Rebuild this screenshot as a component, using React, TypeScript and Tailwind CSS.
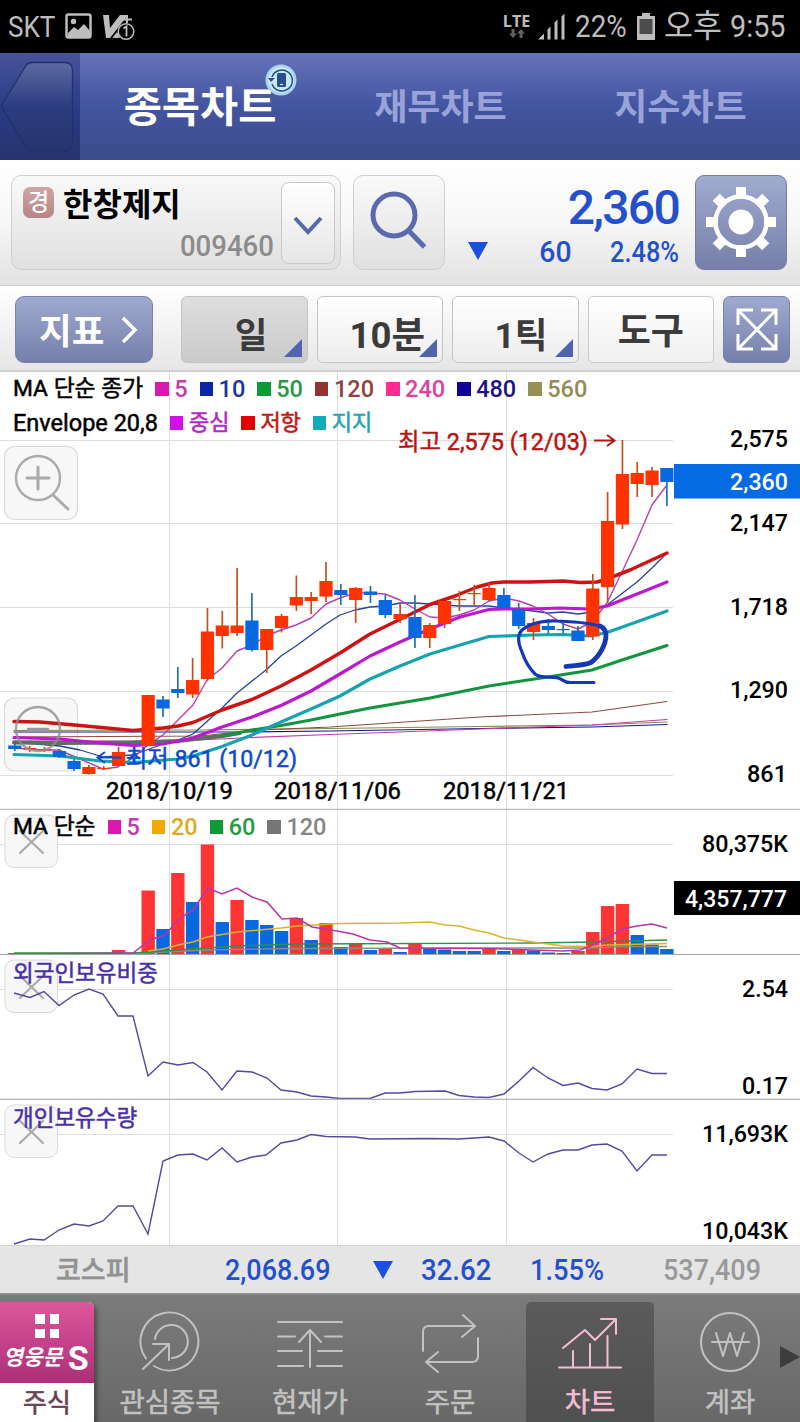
import type { ReactNode } from "react";

const RED = "#ff3300";
const BLUE = "#0768df";
const STEP = 14.82;

const xAt = (i: number) => 14.8 + i * STEP;

// [up, wick top, body top, body bottom, wick bottom]
const candles: [number, number, number, number, number][] = [
  [0, 743, 745.5, 749, 751],
  [1, 746, 748, 749.5, 752],
  [1, 747, 749, 750.5, 752],
  [0, 749, 751, 757, 758],
  [0, 759, 761, 769, 771],
  [1, 765, 767, 774, 774.5],
  [1, 766, 768, 769, 770],
  [1, 747, 752, 766, 766],
  [0, 755, 757, 759, 761],
  [1, 695, 695, 746, 746],
  [0, 696, 699.5, 708.5, 717],
  [0, 667, 689, 693, 698],
  [1, 658, 680, 694.5, 698],
  [1, 608, 631.5, 679, 681],
  [1, 611, 625.5, 636, 648.5],
  [1, 568, 625.5, 633, 636],
  [0, 593, 620.5, 650, 651.5],
  [1, 629, 629, 650, 673],
  [1, 614, 616, 628, 632.5],
  [1, 575.5, 597, 605.5, 611],
  [1, 592, 597, 601, 614],
  [1, 562, 581, 596.5, 602],
  [0, 584, 590, 595, 605],
  [1, 587, 588, 600, 623],
  [0, 586, 591.5, 595, 603],
  [0, 595, 600, 615, 618],
  [1, 604, 614, 619, 623],
  [0, 595, 617, 638, 648],
  [1, 623, 625, 638, 648],
  [1, 601, 601, 624, 628],
  [1, 591, 599, 600.2, 611],
  [1, 585, 593, 594.2, 606],
  [1, 583, 588, 600, 602],
  [0, 588, 595, 608, 609],
  [0, 603, 609, 626, 629],
  [1, 618, 623, 632, 640],
  [0, 619, 626, 630, 634],
  [0, 623, 629, 630.2, 633],
  [0, 626, 630.5, 641, 641],
  [1, 574, 588.5, 636.5, 640],
  [1, 492, 521, 587, 603],
  [1, 440, 474, 524.5, 529],
  [1, 462, 473, 484, 497],
  [1, 467, 470.5, 485, 497],
  [0, 468, 468, 482, 506],
];

// [up, bar top]
const volumes: [number, number][] = [
  [1, 953], [0, 953.5], [1, 953.5], [0, 953.5], [0, 953.5], [1, 953.5], [1, 953.5], [1, 950],
  [0, 953], [1, 890.5], [0, 929], [1, 873], [0, 902], [1, 844.5], [0, 922], [1, 900],
  [0, 920], [0, 925], [0, 931], [1, 918], [0, 940], [1, 923], [0, 947], [1, 943.5],
  [0, 950], [1, 949], [0, 952], [1, 944], [0, 948.5], [0, 949.5], [0, 951], [0, 951],
  [1, 949], [0, 951], [1, 950], [0, 950.5], [0, 952.5], [0, 953], [1, 951], [1, 932],
  [1, 906], [1, 904], [0, 935], [0, 944.5], [0, 949],
];

const priceLines = [
  { color: "#8a8a4a", w: 1.2, pts: "14,730.5 200,730 330,728.5 480,726.5 592,725 667,722" },
  { color: "#1d1488", w: 1.2, pts: "14,732 240,732 330,731 480,728.5 592,727 667,724.5" },
  { color: "#c63aa8", w: 1.2, pts: "14,741 178,741 240,738 330,734.5 480,729 592,725 667,719.5" },
  { color: "#8d4a3e", w: 1.2, pts: "14,737 200,736 260,730 330,727 375,724 480,717 592,712 667,701.5" },
  { color: "#23439c", w: 1.3, pts: "14,742 60,746 80,750 103,757 133,755 163,744 178,740 193,734 222,708 237,693 266,670 281,656 296,646 311,635 326,624 340,615 355,610 370,607 385,606 400,603 415,603 459,606 489,606 504,608 533,611 548,613 563,612 578,614 592,612 607,605 637,582 652,568 667,553" },
  { color: "#b93fae", w: 1.4, pts: "14,748 44,750 59,750 80,759 103,769 118,767 133,758 148,745 163,735 193,705 207,680 222,668 237,651 252,645 266,636 281,630 296,625 311,618 326,604 340,598 355,593 370,593 385,594 400,600 415,609 430,617 445,618 459,615 474,610 489,601 504,598 519,601 533,606 548,614 563,624 578,629 592,622 607,603 622,572 637,540 652,505 667,485" },
  { color: "#5a7060", w: 4, pts: "14,742.5 60,743 133,742.5 178,741 222,736 240,733" },
  { color: "#12953f", w: 3, pts: "222,736 252,730 281,725.5 311,720 340,714 370,708 430,698 489,686 548,677 592,670 622,660 667,645.5" },
  { color: "#bb18cf", w: 3.2, pts: "14,737.5 60,739 100,743 133,745.5 163,744 193,738 222,727 252,717 281,705.5 311,691 340,674 370,656 400,642 430,629 460,617 489,609.5 504,609 530,609 560,608 590,609 607,606 667,582" },
  { color: "#16a3b0", w: 3.2, pts: "14,754.5 60,756 80,758.5 100,761 133,762.5 178,759 193,756 222,746.5 252,735 281,722 311,709 340,696 370,679 400,666 430,654 460,645 489,636.5 504,636 533,635 563,634.5 590,636 607,632.5 667,611" },
  { color: "#cf1212", w: 3.5, pts: "14,721.5 40,722 80,725.5 133,730.5 163,728 178,726 193,722.5 222,710 252,699.5 281,686 311,670 340,653 370,634 413,613 430,604.5 455,596 477,587 492,583 503,582 530,582 563,581 580,582.5 597,582 607,579 630,570 667,553" },
];

const volumeLines = [
  { color: "#8a8a8a", w: 1.3, pts: "14,954 133,953.5 207,950 297,948.5 500,948 592,948 622,946.5 667,946.5" },
  { color: "#2e9148", w: 1.3, pts: "14,953 133,953 207,948 237,946 297,944 533,943 592,942 667,940" },
  { color: "#dcb32c", w: 1.4, pts: "148,951 163,949 178,945 193,942 207,937 237,932 281,928 297,926 340,923.5 400,923 430,922 445,925 459,926 474,930 489,933 504,938 519,940 533,942 563,946 592,946.5 607,945 667,943.5" },
  { color: "#b835a8", w: 1.5, pts: "14,954 133,953 150,940 165,935 180,918 193,910 208,888 222,894 237,888 252,897 267,902 282,919 297,918 312,927 337,931 353,934 370,940 387,942 400,948 489,948.5 563,951 580,950 593,945 607,938 622,929 637,926 652,924 667,928" },
];

const foreignPts =
  "14,993 30,997.5 44,991.5 59,1005.5 74,995 89,989 103,994 118,1016 133,1016 148,1076 163,1062 178,1065 193,1062.5 207,1072 222,1090 237,1071 252,1072 267,1078 281,1090 297,1092 311,1096 326,1097 340,1098.5 370,1098.5 385,1093 400,1093 415,1091.5 445,1091 459,1095.5 474,1097 489,1097.5 504,1094 519,1081 533,1067.5 548,1078 563,1085.5 578,1083 592,1088.5 607,1090 622,1084 637,1069 652,1073.5 667,1073.5";
const personalPts =
  "14,1244 30,1239 44,1240 59,1230 74,1224 89,1226 103,1221 118,1206 133,1206 148,1234 163,1161 178,1155 193,1154 207,1160 222,1148 237,1162 252,1157 266,1155 281,1143 297,1140 311,1134.5 326,1136.5 355,1137 370,1139 430,1138.5 459,1139 489,1137 504,1141 519,1153 533,1162 548,1154 563,1150 578,1150 592,1145 607,1144 622,1151 637,1171 652,1155 667,1155";

type LegendItem = { label: string; square: string; text: string };

const priceLegend: LegendItem[] = [
  { label: "5", square: "bg-[#dc18b2]", text: "text-[#c23caa]" },
  { label: "10", square: "bg-[#0a26aa]", text: "text-[#1c35a0]" },
  { label: "50", square: "bg-[#0f9a38]", text: "text-[#279947]" },
  { label: "120", square: "bg-[#963232]", text: "text-[#8c4440]" },
  { label: "240", square: "bg-[#ff2d92]", text: "text-[#dc419c]" },
  { label: "480", square: "bg-[#10009a]", text: "text-[#1d1285]" },
  { label: "560", square: "bg-[#969152]", text: "text-[#928c55]" },
];
const envelopeLegend: LegendItem[] = [
  { label: "중심", square: "bg-[#d010e6]", text: "text-[#b42ac6]" },
  { label: "저항", square: "bg-[#e60000]", text: "text-[#c01818]" },
  { label: "지지", square: "bg-[#10aabb]", text: "text-[#28a3ad]" },
];
const volumeLegend: LegendItem[] = [
  { label: "5", square: "bg-[#dc18b2]", text: "text-[#c23caa]" },
  { label: "20", square: "bg-[#f0aa00]", text: "text-[#dfaa22]" },
  { label: "60", square: "bg-[#0f9a38]", text: "text-[#279947]" },
  { label: "120", square: "bg-[#777777]", text: "text-[#858585]" },
];

function Legend({ title, items, korean }: { title: string; items: LegendItem[]; korean?: boolean }) {
  return (
    <div className="flex h-[34px] items-center gap-[12px] leading-[34px] whitespace-nowrap">
      <span className={`text-black [-webkit-text-stroke:0.5px_currentColor] ${korean ? "text-[23.5px]" : "text-[22.8px]"}`}>{title}</span>
      {items.map((it) => (
        <span key={it.label} className={`flex items-center gap-[5.5px] ${it.text}`}>
          <i className={`block h-[13.5px] w-[13.5px] ${it.square}`} />
          <span className={korean ? "text-[22px] [-webkit-text-stroke:0.6px_currentColor]" : "text-[23.5px] font-medium"}>{it.label}</span>
        </span>
      ))}
    </div>
  );
}

function Panel({ top, height, grid, children, legend }: {
  top: number;
  height: number;
  grid: number[];
  children: ReactNode;
  legend: ReactNode;
}) {
  const bottom = top + height;
  return (
    <section className="relative">
      <svg className="block" width={800} height={height} viewBox={`0 ${top} 800 ${height}`}>
        {[169.5, 337.5, 506.5].map((x) => (
          <line key={x} x1={x} x2={x} y1={top} y2={bottom} stroke="#dedede" />
        ))}
        {grid.map((y) => (
          <line key={y} x1={0} x2={673} y1={y} y2={y} stroke="#dedede" />
        ))}
        {children}
      </svg>
      <div className="absolute top-0 left-[13px]">{legend}</div>
    </section>
  );
}

function AxisLabel({ x, y, w, fill = "#000", children }: {
  x: number;
  y: number;
  w: number;
  fill?: string;
  children: string;
}) {
  return (
    <text x={x - w} y={y + 8.3} textLength={w} lengthAdjust="spacingAndGlyphs" fontSize={23.5} fontWeight={500} fill={fill}>
      {children}
    </text>
  );
}

function CloseBox({ y }: { y: number }) {
  return (
    <g>
      <rect x={5} y={y} width={52.5} height={52.5} rx={9} fill="#f7f7f7" stroke="#d9d9d9" />
      <path d={`M20 ${y + 16}l23 22M43 ${y + 16}l-23 22`} stroke="#aaa" strokeWidth={2.2} strokeLinecap="round" />
    </g>
  );
}

function StatusBar() {
  return (
    <div className="flex h-[53px] items-center bg-black px-2 text-[#bdbdbd]">
      <span className="w-[47px] text-[30px] leading-[53px] whitespace-nowrap">
        <span className="inline-block origin-left scale-x-[0.87]">SKT</span>
      </span>
      <svg className="ml-[10px]" width="27" height="27" viewBox="0 0 27 27">
        <rect x="1.5" y="1.5" width="24" height="23" rx="2" fill="none" stroke="#bdbdbd" strokeWidth="2.5" />
        <circle cx="8.5" cy="8.5" r="2.7" fill="#bdbdbd" />
        <path d="M3 20l6-6 4 3 6-6 6 7v6H3z" fill="#bdbdbd" />
      </svg>
      <svg className="ml-[10px]" width="33" height="28" viewBox="0 0 33 28">
        <path d="M1 2h6l1 13L18 2h8L8 25H4z" fill="#bdbdbd" />
        <path d="M25 2v8M20 6.500h10" stroke="#bdbdbd" strokeWidth="2" />
        <path d="M11 24l4-5 3 6h-7z" fill="#bdbdbd" />
        <circle cx="24" cy="18.500" r="7.800" fill="#000" stroke="#bdbdbd" strokeWidth="1.500" />
        <path d="M21.500 15.500l3-2v10" fill="none" stroke="#bdbdbd" strokeWidth="1.800" />
      </svg>
      <div className="ml-auto flex items-center">
        <div className="flex h-[28px] w-[29px] flex-col items-center">
          <span className="font-['Open_Sans'] text-[16px] leading-[16px] font-bold">LTE</span>
          <svg width="16" height="9" viewBox="0 0 16 9" fill="#606060">
            <path d="M2.500 0h3v4.500h2.500L4 9 0 4.500h2.500zM10.500 9h3V4.500H16L12 0 8 4.500h2.500z" />
          </svg>
        </div>
        <svg className="ml-[7px]" width="28" height="27" viewBox="0 0 28 27" fill="#bdbdbd">
          <path d="M0 26.500l6-6v6zM9.500 16.500l3-3v13h-3zM16.500 9.500l3-3v20h-3zM23.500 3.500l3-3v26h-3z" />
        </svg>
        <span className="ml-[9px] w-[53px] text-[32px] leading-[53px] whitespace-nowrap">
          <span className="inline-block origin-left scale-x-[0.87]">22%</span>
        </span>
        <svg className="ml-[9px]" width="18" height="27" viewBox="0 0 18 27">
          <path d="M5 0h8v3h5v24H0V3h5z" fill="#bdbdbd" />
          <path d="M2.500 6h13v15h-13z" fill="#4c4c4c" />
        </svg>
        <span className="ml-[9px] w-[58px] text-[31.500px] leading-[53px] whitespace-nowrap">오후</span>
        <span className="ml-[8px] w-[62px] text-[32px] leading-[53px] whitespace-nowrap">
          <span className="inline-block origin-left scale-x-[0.9]">9:55</span>
        </span>
      </div>
    </div>
  );
}

function Tabs() {
  return (
    <header className="flex h-[107px] bg-linear-to-b from-[#6673ba] via-[#4354a0] via-50% to-[#3b4c8a] leading-[110px] font-bold">
      <button className="h-full w-[80px] bg-linear-to-b from-[#46549c] via-[#293a82] via-55% to-[#27346f]">
        <svg width="80" height="107" viewBox="0 0 80 107">
          <defs>
            <linearGradient id="back" x1="0" y1="0" x2="0" y2="1">
              <stop offset="0" stopColor="#5d69a4" />
              <stop offset="0.500" stopColor="#2c3c80" />
              <stop offset="1" stopColor="#27356f" />
            </linearGradient>
          </defs>
          <path d="M32 9.500H65q7.500 0 7.500 7.500V90q0 7.500-7.500 7.500H32q-4 0-6-3L3 56q-2-3 0-6L26 12.500q2-3 6-3z" fill="url(#back)" stroke="#22306a" strokeWidth="1.300" />
        </svg>
      </button>
      <div className="relative w-[240px] text-center text-[41.500px] text-white">
        종목차트
        <svg className="absolute top-[11px] left-[185px]" width="32" height="32" viewBox="0 0 32 32">
          <circle cx="16" cy="16" r="15.500" fill="#a9d4ee" />
          <circle cx="16" cy="16" r="13" fill="#c9e7f7" />
          <path d="M7 13a10.500 10.500 0 1 1 0 7" fill="none" stroke="#24508c" strokeWidth="1.500" />
          <path d="M3 14h7l-4 4z" fill="#24508c" />
          <rect x="12" y="9" width="9" height="14" rx="1.500" fill="#24508c" />
          <path d="M15 20.500h3" stroke="#c9e7f7" strokeWidth="1.200" />
        </svg>
      </div>
      <div className="w-[241px] text-center text-[36px] text-[#98a4d9]">재무차트</div>
      <div className="w-[239px] text-center text-[36px] text-[#98a4d9]">지수차트</div>
    </header>
  );
}

function StockBar() {
  return (
    <div className="flex h-[126px] items-start border-b border-[#cfcfcf] bg-linear-to-b from-white via-[#f7f7f7] via-50% to-[#e2e2e2] pt-[15px] pl-[11px]">
      <div className="flex h-[95px] w-[330px] rounded-[10px] border-[1.500px] border-[#cfcfcf] bg-linear-to-b from-[#f9f9f9] to-[#e0e0e0]">
        <div className="flex w-[262px] flex-col">
          <div className="flex items-start pt-[11px] pl-[11px]">
            <span className="h-[31px] w-[31px] rounded-[7px] bg-linear-to-b from-[#cfa5a5] to-[#b78585] text-center text-[23px] leading-[31px] font-medium text-white">경</span>
            <span className="ml-[9px] text-[32px] leading-[36px] font-bold text-black">한창제지</span>
          </div>
          <span className="mt-[6px] text-right text-[29px] leading-[34px] text-[#8c8c8c]">
            <span className="inline-block origin-right scale-x-[0.950] font-medium">009460</span>
          </span>
        </div>
        <button className="mt-[6px] ml-[7px] flex h-[82px] w-[54px] items-center justify-center rounded-[8px] border-[1.500px] border-[#c9c9c9] bg-linear-to-b from-white to-[#e6e6e6]">
          <svg className="mt-[6px]" width="30" height="20" viewBox="0 0 30 20" fill="none" stroke="#5668ae" strokeWidth="4">
            <path d="M2 2l13 14L28 2" />
          </svg>
        </button>
      </div>
      <button className="ml-[12px] flex h-[95px] w-[92px] items-center justify-center rounded-[10px] border-[1.500px] border-[#cfcfcf] bg-linear-to-b from-[#fafafa] to-[#e0e0e0]">
        <svg className="mb-[6px]" width="60" height="62" viewBox="0 0 60 62" fill="none" stroke="#5a6aad" strokeWidth="5">
          <circle cx="25" cy="26" r="21" />
          <path d="M39 41l16.500 17" />
        </svg>
      </button>
      <div className="ml-[23px] flex w-[211px] flex-col font-medium text-[#2450cc]">
        <span className="pt-[7px] text-right text-[48px] leading-[52px] tracking-[-1.700px]">2,360</span>
        <div className="mt-[1px] flex h-[34px] items-center text-[29.500px] leading-[34px]">
          <svg className="mb-[3px]" width="20" height="18" viewBox="0 0 20 18" fill="#1a4fe0">
            <path d="M0 0h20L10 18z" />
          </svg>
          <span className="ml-auto origin-right scale-x-[0.960]">60</span>
          <span className="w-[107px] origin-right scale-x-[0.860] text-right">2.48%</span>
        </div>
      </div>
      <button className="ml-[16px] flex h-[95px] w-[92px] items-center justify-center rounded-[9px] border border-[#747ea9] bg-linear-to-b from-[#a1abcf] to-[#767fa9]">
        <svg className="mb-[2px]" width="70" height="72" viewBox="-35 -36 70 72">
          {[0, 45, 90, 135, 180, 225, 270, 315].map((a) => (
            <rect key={a} x="-5" y="-35" width="10" height="12" fill="#fff" transform={`rotate(${a})`} />
          ))}
          <circle r="25.500" fill="none" stroke="#fff" strokeWidth="4.500" />
          <circle r="12.500" fill="#fff" />
        </svg>
      </button>
    </div>
  );
}

function PeriodButton({ label, className }: { label: string; className: string }) {
  return (
    <button className={`relative h-[67px] w-[126.500px] rounded-[6px] border-[1.500px] border-[#c4c4c4] bg-linear-to-b pt-[10px] text-right leading-[58px] font-bold text-[#3b3b3b] ${className}`}>
      {label}
      <svg className="absolute right-[5px] bottom-[5px]" width="18" height="18" viewBox="0 0 18 18" fill="#5064ae">
        <path d="M18 0v18H0z" />
      </svg>
    </button>
  );
}

function Toolbar() {
  return (
    <div className="flex h-[86px] items-start gap-[9px] border-b-2 border-[#cfcfcf] bg-linear-to-b from-white to-[#e6e6e6] pt-[10px] pl-[15px]">
      <button className="mr-[19px] flex h-[67px] w-[138px] items-center rounded-[9px] border border-[#7983ae] bg-linear-to-b from-[#a0aace] to-[#757fab] pl-[23px] text-[35.500px] font-bold text-white">
        <span className="pt-[4px] leading-[66px]">지표</span>
        <svg className="mt-[1px] ml-[17px]" width="18" height="28" viewBox="0 0 18 28" fill="none" stroke="#fff" strokeWidth="3.500">
          <path d="M2 2l12 12L2 26" />
        </svg>
      </button>
      <PeriodButton label="일" className="from-[#dedede] to-[#cacaca] pr-[39px] text-[35.5px]" />
      <PeriodButton label="10분" className="from-white to-[#ededed] pr-[17px] text-[36.5px]" />
      <PeriodButton label="1틱" className="from-white to-[#ededed] pr-[30px] text-[35.5px]" />
      <button className="h-[67px] w-[126.500px] rounded-[5px] border-[1.500px] border-[#cacaca] bg-linear-to-b from-white to-[#f0f0f0] pt-[4px] text-[36px] leading-[60px] font-bold text-[#3b3b3b]">도구</button>
      <button className="flex h-[67px] w-[67px] items-center justify-center rounded-[7px] border border-[#7983ae] bg-linear-to-b from-[#a0aace] to-[#757fab]">
        <svg width="42" height="43" viewBox="0 0 42 43" fill="none" stroke="#fff" strokeWidth="3">
          <path d="M2 17V2h15M25 2h15v15M40 26v15H25M17 41H2V26M2 2l38 39M40 2L2 41" />
        </svg>
      </button>
    </div>
  );
}

function PricePanel() {
  return (
    <Panel
      top={372}
      height={438}
      grid={[440.5, 523.5, 607.5, 691.5, 775.5]}
      legend={
        <>
          <Legend title="MA 단순 종가" items={priceLegend} />
          <Legend title="Envelope 20,8" items={envelopeLegend} korean />
        </>
      }
    >
      <g fill="none" stroke="#aaa" strokeWidth={2.4} strokeLinecap="round">
        <rect x={4.5} y={446.5} width={73} height={73} rx={10} fill="#f7f7f7" stroke="#d9d9d9" strokeWidth={1.2} />
        <circle cx={38} cy={478} r={22} />
        <path d="M53 495l15 14" strokeWidth={3} />
        <path d="M27 478h22M38 467v22" strokeWidth={3} />
        <rect x={4.5} y={698} width={73} height={73} rx={10} fill="#f7f7f7" stroke="#d9d9d9" strokeWidth={1.2} />
      </g>
      {priceLines.map((l) => (
        <polyline key={l.pts} points={l.pts} fill="none" stroke={l.color} strokeWidth={l.w} strokeLinejoin="round" strokeLinecap="round" />
      ))}
      {candles.map(([up, hi, open, close, lo], i) => (
        <g key={i}>
          <line x1={xAt(i)} x2={xAt(i)} y1={hi} y2={lo} stroke={up ? "#c4501f" : "#2272a8"} strokeWidth={1.7} />
          <rect x={xAt(i) - 6.6} y={open} width={13.2} height={close - open} fill={up ? RED : BLUE} />
        </g>
      ))}
      <circle cx={38} cy={729} r={22} fill="none" stroke="#8f8f8f" strokeWidth={2.4} opacity={0.8} />
      <path d="M27 729.500h22" stroke="#999" strokeWidth={3.5} />
      <g fill="none" stroke="#1238b8" strokeLinecap="round" strokeLinejoin="round">
        <path d="M603 628C597 624 583 622 557 621C545 620 530 623 522 630C517 635 518 643 522 652C525 661 531 670 535 674C541 679 551 676 558 678C563 679 563 682.500 570 682.500H594" strokeWidth={3.2} />
        <path d="M566 666.500C574 665 583 666 591 662.500C600 656 606 644 606 635C606 631 604 628 600 626" strokeWidth={4.8} />
      </g>
      <g fontSize={23.5} strokeWidth={0.5}>
        <text x={398} y={449.5} textLength={190} lengthAdjust="spacingAndGlyphs" fill="#b81414" stroke="#b81414">최고 2,575 (12/03)</text>
        <path d="M594 440.500h19M607 435l7.500 5.500-7.500 5.500" fill="none" stroke="#b81414" strokeWidth={2} />
        <text x={126} y={766.5} textLength={171} lengthAdjust="spacingAndGlyphs" fill="#0f49cf" stroke="#0f49cf">최저 861 (10/12)</text>
        <path d="M121 757.500H99M105 752l-7.500 5.500 7.500 5.500" fill="none" stroke="#0f49cf" strokeWidth={2} />
        <text x={106} y={799} textLength={127} lengthAdjust="spacingAndGlyphs" stroke="#000">2018/10/19</text>
        <text x={274} y={799} textLength={127} lengthAdjust="spacingAndGlyphs" stroke="#000">2018/11/06</text>
        <text x={443} y={799} textLength={126} lengthAdjust="spacingAndGlyphs" stroke="#000">2018/11/21</text>
      </g>
      <rect x={674} y={464} width={126} height={34.5} fill="#056be2" />
      <AxisLabel x={788} y={439} w={58}>2,575</AxisLabel>
      <AxisLabel x={788} y={481.5} w={58} fill="#fff">2,360</AxisLabel>
      <AxisLabel x={788} y={523} w={58}>2,147</AxisLabel>
      <AxisLabel x={788} y={606.5} w={58}>1,718</AxisLabel>
      <AxisLabel x={788} y={690} w={58}>1,290</AxisLabel>
      <AxisLabel x={787} y={774} w={40}>861</AxisLabel>
      <line x1={0} x2={800} y1={809.5} y2={809.5} stroke="#bdbdbd" strokeWidth={1.5} />
    </Panel>
  );
}

function VolumePanel() {
  return (
    <Panel top={810} height={145} grid={[844.5]} legend={<Legend title="MA 단순" items={volumeLegend} />}>
      <CloseBox y={815} />
      {volumes.map(([up, y], i) => (
        <rect key={i} x={xAt(i) - 6.7} y={y} width={13.4} height={955 - y} fill={up ? "#ff3434" : BLUE} />
      ))}
      {volumeLines.map((l) => (
        <polyline key={l.color} points={l.pts} fill="none" stroke={l.color} strokeWidth={l.w} />
      ))}
      <line x1={0} x2={800} y1={954.5} y2={954.5} stroke="#a5a5a5" strokeWidth={1} />
      <rect x={674} y={881} width={126} height={34} />
      <AxisLabel x={788} y={843.5} w={86}>80,375K</AxisLabel>
      <AxisLabel x={787} y={898.5} w={102} fill="#fff">4,357,777</AxisLabel>
    </Panel>
  );
}

function IndicatorTitle({ children }: { children: string }) {
  return (
    <div className="text-[22.5px] leading-[36px] whitespace-nowrap text-[#4a30a4] [-webkit-text-stroke:0.5px_currentColor]">{children}</div>
  );
}

function IndexBar() {
  return (
    <div className="flex h-[48px] items-center border-t border-[#d4d4d4] bg-[#e5e5e5] text-[29px] leading-[50px] font-medium whitespace-nowrap text-[#2450cc]">
      <span className="ml-[56px] w-[169px] pt-[3px] text-[27px] text-[#929292] [-webkit-text-stroke:0.5px_currentColor]">코스피</span>
      <span className="w-[148px]"><span className="inline-block origin-left scale-x-[0.930]">2,068.69</span></span>
      <svg width="20" height="18" viewBox="0 0 20 18" fill="#1a4fe0">
        <path d="M0 0h20L10 18z" />
      </svg>
      <span className="ml-[28px] w-[109px]"><span className="inline-block origin-left scale-x-[0.950]">32.62</span></span>
      <span className="w-[133px]"><span className="inline-block origin-left scale-x-[0.940]">1.55%</span></span>
      <span className="inline-block origin-left scale-x-[0.930] text-[#999]">537,409</span>
    </div>
  );
}

const navItems = [
  {
    label: "관심종목",
    icon: (
      <>
        <path d="M-24 16.500A29 29 0 1 1 -16 24" />
        <path d="M-15-3A16.500 16.500 0 1 1 2 16" />
        <path d="M-27 27L-1 2M-17 2H-1V18" />
      </>
    ),
  },
  {
    label: "현재가",
    icon: <path d="M-32-20H32M-32-5.500h17M15-5.500H32M-32 9h24M8 9H32M-32 24h25M7 24H32M0 25V-11M-11 0L0-12L11 0" />,
  },
  {
    label: "주문",
    icon: <path d="M-27 9V-10q0-6 6-6H24M13-27L25-16L12-5M28-4V14q0 6-6 6H-23M-12 10L-24 20L-12 30" />,
  },
  {
    label: "차트",
    icon: <path d="M-31 25.500H31M-17 25V9M0 25V2M17.500 25V-6M-27 6L-5-12L5-2L26-23M11-23H26V-8" />,
  },
  {
    label: "계좌",
    icon: (
      <>
        <circle r="29" />
        <path d="M-14-9L-7 14L0-9L7 14L14-9M-18 0H19" />
      </>
    ),
  },
];

function BottomNav() {
  return (
    <nav className="relative flex h-[129px] border-t-2 border-[#8b8b8b] bg-linear-to-b from-[#7b7b7b] to-[#686868] pt-[7px]">
      <div className="flex w-[94px] flex-col overflow-hidden rounded-tr-[6px] bg-white shadow-[3px_3px_4px_rgba(0,0,0,0.35)]">
        <div className="flex h-[81px] flex-col items-center bg-linear-to-b from-[#de569c] to-[#ab2f77] pt-[12px] text-white">
          <div className="grid grid-cols-2 gap-[5px]">
            <i className="block h-[9.5px] w-[9.5px] bg-white" />
            <i className="block h-[9.5px] w-[9.5px] bg-white" />
            <i className="block h-[9.5px] w-[9.5px] bg-white" />
            <i className="block h-[9.5px] w-[9.5px] bg-white" />
          </div>
          <div className="flex items-center leading-[40px] font-bold">
            <span className="-skew-x-12 text-[21.5px]">영웅문</span>
            <span className="ml-[3px] text-[34px]">S</span>
          </div>
        </div>
        <span className="pt-[2px] text-center text-[26px] leading-[36px] text-[#6b3f55] [-webkit-text-stroke:0.6px_currentColor]">주식</span>
      </div>
      <div className="ml-[6px] flex">
        {navItems.map((it) => {
          const active = it.label === "차트";
          return (
            <div key={it.label} className="w-[140px] px-[6px]">
              <div className={`flex h-[120px] flex-col items-center rounded-t-[5px] ${active ? "bg-linear-to-b from-[#5b5b5b] to-[#505050] text-[#f6bcd6]" : "text-[#c2c2c2]"}`}>
                <svg className="mt-[5px]" width="70" height="70" viewBox="-35 -35 70 70" fill="none" stroke="currentColor" strokeWidth="2" strokeLinecap="round" strokeLinejoin="round">
                  {it.icon}
                </svg>
                <span className="mt-[6px] text-[27.5px] leading-[39px] whitespace-nowrap [-webkit-text-stroke:0.5px_currentColor]">{it.label}</span>
              </div>
            </div>
          );
        })}
      </div>
      <svg className="absolute top-[51px] right-0" width="20" height="22" viewBox="0 0 20 22" fill="#3d3d3d">
        <path d="M0 0l20 11L0 22z" />
      </svg>
    </nav>
  );
}

export default function App() {
  return (
    <div className="flex h-[1422px] w-[800px] flex-col overflow-hidden bg-white font-[Roboto,'Noto_Sans_CJK_KR',sans-serif]">
      <StatusBar />
      <Tabs />
      <StockBar />
      <Toolbar />
      <PricePanel />
      <VolumePanel />
      <Panel top={955} height={145} grid={[989.5]} legend={<IndicatorTitle>외국인보유비중</IndicatorTitle>}>
        <CloseBox y={960} />
        <polyline points={foreignPts} fill="none" stroke="#57489c" strokeWidth={1.4} />
        <line x1={0} x2={800} y1={1099.5} y2={1099.5} stroke="#b5b5b5" strokeWidth={1.5} />
        <AxisLabel x={788} y={988.5} w={46}>2.54</AxisLabel>
        <AxisLabel x={788} y={1085.5} w={46}>0.17</AxisLabel>
      </Panel>
      <Panel top={1100} height={145} grid={[1134.5]} legend={<IndicatorTitle>개인보유수량</IndicatorTitle>}>
        <CloseBox y={1105} />
        <polyline points={personalPts} fill="none" stroke="#57489c" strokeWidth={1.4} />
        <AxisLabel x={788} y={1133.5} w={86}>11,693K</AxisLabel>
        <AxisLabel x={788} y={1230.5} w={86}>10,043K</AxisLabel>
      </Panel>
      <IndexBar />
      <BottomNav />
    </div>
  );
}
